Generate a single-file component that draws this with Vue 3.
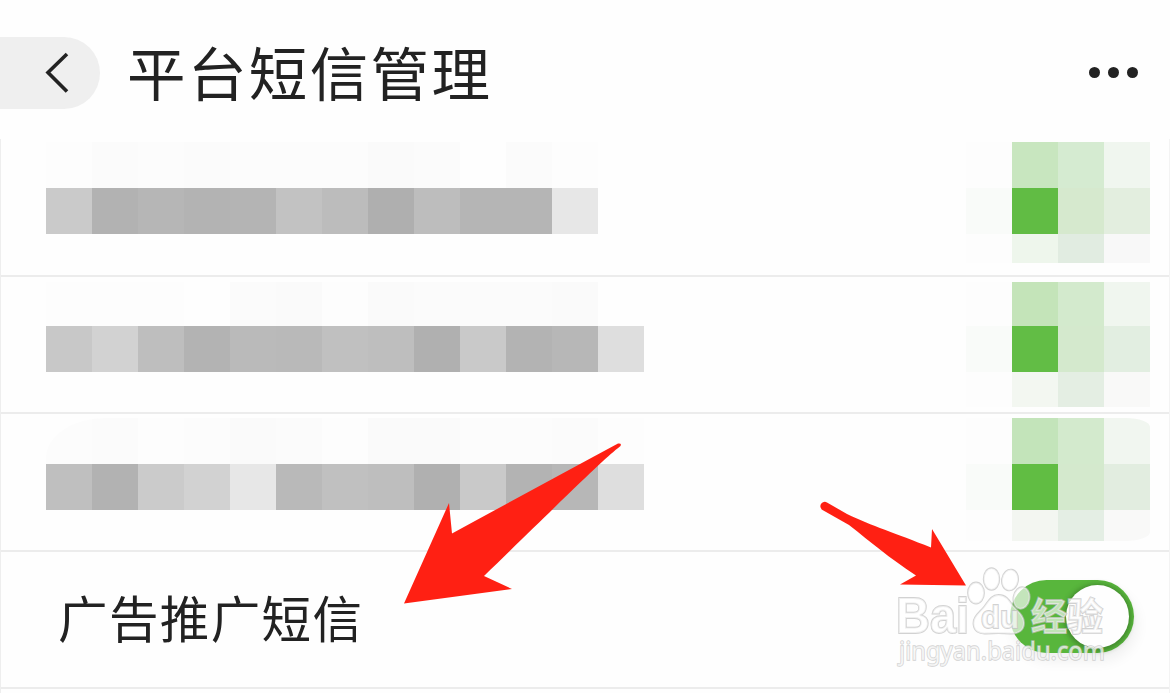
<template>
    <div class="page">
        <header class="header">
            <button class="back" aria-label="返回">
                <svg width="30" height="44" viewBox="0 0 30 44">
                    <path d="M25 3 L6 21.5 L25 40.5" />
                </svg>
            </button>
            <h1 class="title">平台短信管理</h1>
            <div class="more">
                <span class="dot"></span>
                <span class="dot"></span>
                <span class="dot"></span>
            </div>
        </header>

        <main class="list">
            <div v-for="(row, index) in rows" :key="index" class="row" :class="'row-' + (index + 1)">
                <div class="name">
                    <div class="line line-top">
                        <span v-for="(c, i) in row.top" :key="i" class="cell" :style="{ background: grey(c) }"></span>
                    </div>
                    <div class="line line-middle">
                        <span v-for="(c, i) in row.middle" :key="i" class="cell" :style="{ background: grey(c) }"></span>
                    </div>
                    <div class="line line-bottom"></div>
                </div>
                <div class="status">
                    <div v-for="(line, l) in row.status" :key="l" class="line" :class="lineNames[l]">
                        <span v-for="(c, i) in line" :key="i" class="cell" :style="{ background: c }"></span>
                    </div>
                </div>
            </div>

            <div class="row row-last">
                <span class="label">广告推广短信</span>
                <div class="toggle">
                    <span class="knob"></span>
                </div>
            </div>
        </main>

        <svg class="overlay" width="1170" height="693" viewBox="0 0 1170 693">
            <g class="arrows">
                <path d="M404 603.5 L449 503 L452 533.5 Q530 491 618 443.5 Q622 443 620.5 446 C603 460 590 473 484 576 L512 589 Z" />
                <path d="M966 585.5 L900 584.5 L916 575.5 C888 557 872 543 849 525 L822.500 510 A4.300 4.300 0 0 1 827 502.500 L847 514 C872 526 895 533 931 547.500 L932 529 Z" />
            </g>
            <g class="mark">
                <text class="mark-bai" x="896" y="633" textLength="73" lengthAdjust="spacingAndGlyphs">Bai</text>
                <ellipse cx="976" cy="593" rx="8" ry="10.500" />
                <ellipse cx="991.500" cy="579" rx="7.800" ry="10.800" />
                <ellipse cx="1010" cy="580" rx="8" ry="10.500" transform="rotate(10 1010 580)" />
                <ellipse cx="1021.500" cy="598" rx="8" ry="10.800" transform="rotate(10 1021.5 598)" />
                <path d="M998.500 595 C991 595 988 602 984 607 C979 613 973 617 973.500 624 C974 631 979 634 986 633.500 C993 633 1004 633 1010 633.500 C1019 634 1024 630 1024 623 C1024 615 1017 611 1013 606 C1009 600 1006 595 998.500 595 Z" />
                <text class="mark-du" x="981" y="628" textLength="38" lengthAdjust="spacingAndGlyphs">du</text>
                <text class="mark-jy" x="1031" y="630" textLength="72" lengthAdjust="spacingAndGlyphs">经验</text>
                <text class="mark-url" x="899" y="660" textLength="206" lengthAdjust="spacingAndGlyphs">jingyan.baidu.com</text>
            </g>
        </svg>
    </div>
</template>

<script setup>
const lineNames = ['line-top', 'line-middle', 'line-bottom']

const grey = (v) => `rgb(${v}, ${v}, ${v})`

const rows = [
    {
        top: [253, 251, 252, 251, 252, 252, 252, 250, 251, 254, 251, 253],
        middle: [202, 178, 182, 179, 180, 194, 188, 175, 189, 181, 181, 231],
        status: [
            ['#fdfdfd', '#c8e6bf', '#d5ebd1', '#f0f6ef'],
            ['#f9fbf9', '#61bc44', '#d6e9ce', '#e3eedf'],
            ['#fdfdfd', '#eef6ec', '#e1ece1', '#f8f8f8']
        ]
    },
    {
        top: [253, 253, 253, 254, 251, 250, 253, 250, 251, 251, 251, 250],
        middle: [200, 210, 190, 179, 186, 185, 192, 190, 176, 201, 179, 183, 222],
        status: [
            ['#fdfdfd', '#c4e4b9', '#d3eacd', '#f0f6ef'],
            ['#f9fbf9', '#62bd45', '#d4e9cd', '#e2eee1'],
            ['#fdfdfd', '#f3f7f1', '#e4eee3', '#f9f9f8']
        ]
    },
    {
        top: [252, 251, 253, 252, 250, 251, 253, 250, 250, 252, 252, 251, 253],
        middle: [191, 178, 203, 210, 231, 185, 192, 190, 176, 201, 179, 183, 222],
        status: [
            ['#fdfdfd', '#c3e4ba', '#d3eacd', '#f1f6f0'],
            ['#f9fbf9', '#61bd43', '#d4e9cd', '#e2ede0'],
            ['#fdfdfd', '#f3f6f1', '#e4eee4', '#f9f9f8']
        ]
    }
]
</script>

<style>
body {
    margin: 0;
    overflow: hidden;
}
</style>

<style scoped>
.page {
    position: relative;
    width: 1170px;
    height: 693px;
    overflow: hidden;
    background: #fefefe;
    color: #222;
    font-family: "Noto Sans CJK SC", "Noto Sans", sans-serif;
}

.header {
    display: flex;
    align-items: center;
    height: 139px;
    padding: 0 32px 0 0;
    box-sizing: border-box;
}

.back {
    display: flex;
    align-items: center;
    width: 100px;
    height: 72px;
    margin-top: 7px;
    padding: 0 0 0 42px;
    border: 0;
    border-radius: 0 36px 36px 0;
    background: #efefef;
}

.back path {
    fill: none;
    stroke: #222;
    stroke-width: 3.6;
}

.title {
    margin: 2px 0 0 27px;
    font-size: 58.5px;
    font-weight: 400;
    letter-spacing: 2.4px;
    line-height: 80px;
    white-space: nowrap;
}

.more {
    display: flex;
    gap: 8px;
    margin: 6px 0 0 auto;
}

.dot {
    width: 11px;
    height: 11px;
    border-radius: 50%;
    background: #222;
}

.list {
    height: 554px;
    border-left: 1px solid #eee;
    border-right: 1px solid #f3f3f3;
}

.row {
    display: flex;
    justify-content: space-between;
    box-sizing: border-box;
    height: 138px;
    padding: 3px 19px 0 45px;
    border-bottom: 2px solid #ececec;
}

.line {
    display: flex;
    height: 46px;
}

.cell {
    width: 46px;
}

.status {
    overflow: hidden;
}

.status .line-bottom {
    height: 29px;
}

.row-2 {
    height: 137px;
    padding-top: 5px;
}

.row-2 .line-top {
    height: 44px;
}

.row-2 .status .line-bottom {
    height: 35px;
}

.row-3 {
    padding-top: 4px;
}

.row-3 .name {
    overflow: hidden;
    border-top-left-radius: 60px 40px;
}

.row-3 .status .line-bottom {
    height: 31px;
}

.row-3 .status {
    height: 123px;
    border-radius: 0 24px 24px 0 / 0 9px 9px 0;
}

.row-last {
    align-items: center;
    height: 137px;
    padding: 0 35px 0 57px;
}

.label {
    margin-top: -5px;
    font-size: 49.5px;
    letter-spacing: 1.4px;
    line-height: 70px;
    white-space: nowrap;
}

.toggle {
    display: flex;
    align-items: center;
    justify-content: flex-end;
    box-sizing: border-box;
    width: 124px;
    height: 73px;
    margin-top: -7px;
    padding-right: 5px;
    border-radius: 37px;
    background: #58b63c;
    box-shadow: 3px 8px 14px rgba(0, 0, 0, 0.06);
}

.knob {
    width: 63px;
    height: 63px;
    border-radius: 50%;
    background: #fefefe;
    box-shadow: 0 1px 5px 2px rgba(40, 80, 30, 0.45);
}

.overlay {
    position: absolute;
    top: 0;
    left: 0;
    pointer-events: none;
}

.arrows {
    fill: #ff2013;
}

.mark {
    fill: rgba(255, 255, 255, 0.65);
    stroke: rgba(195, 195, 195, 0.75);
    stroke-width: 1.8;
    paint-order: stroke;
}

.mark-bai,
.mark-du {
    font-family: "Liberation Sans", Arial, sans-serif;
    font-weight: 700;
}

.mark-bai {
    font-size: 50px;
}

.mark-du {
    font-size: 31px;
}

.mark-jy {
    font-size: 38px;
    font-weight: 700;
}

.mark-url {
    font-family: "Noto Sans", sans-serif;
    font-size: 25px;
    stroke-width: 1.4;
}
</style>
